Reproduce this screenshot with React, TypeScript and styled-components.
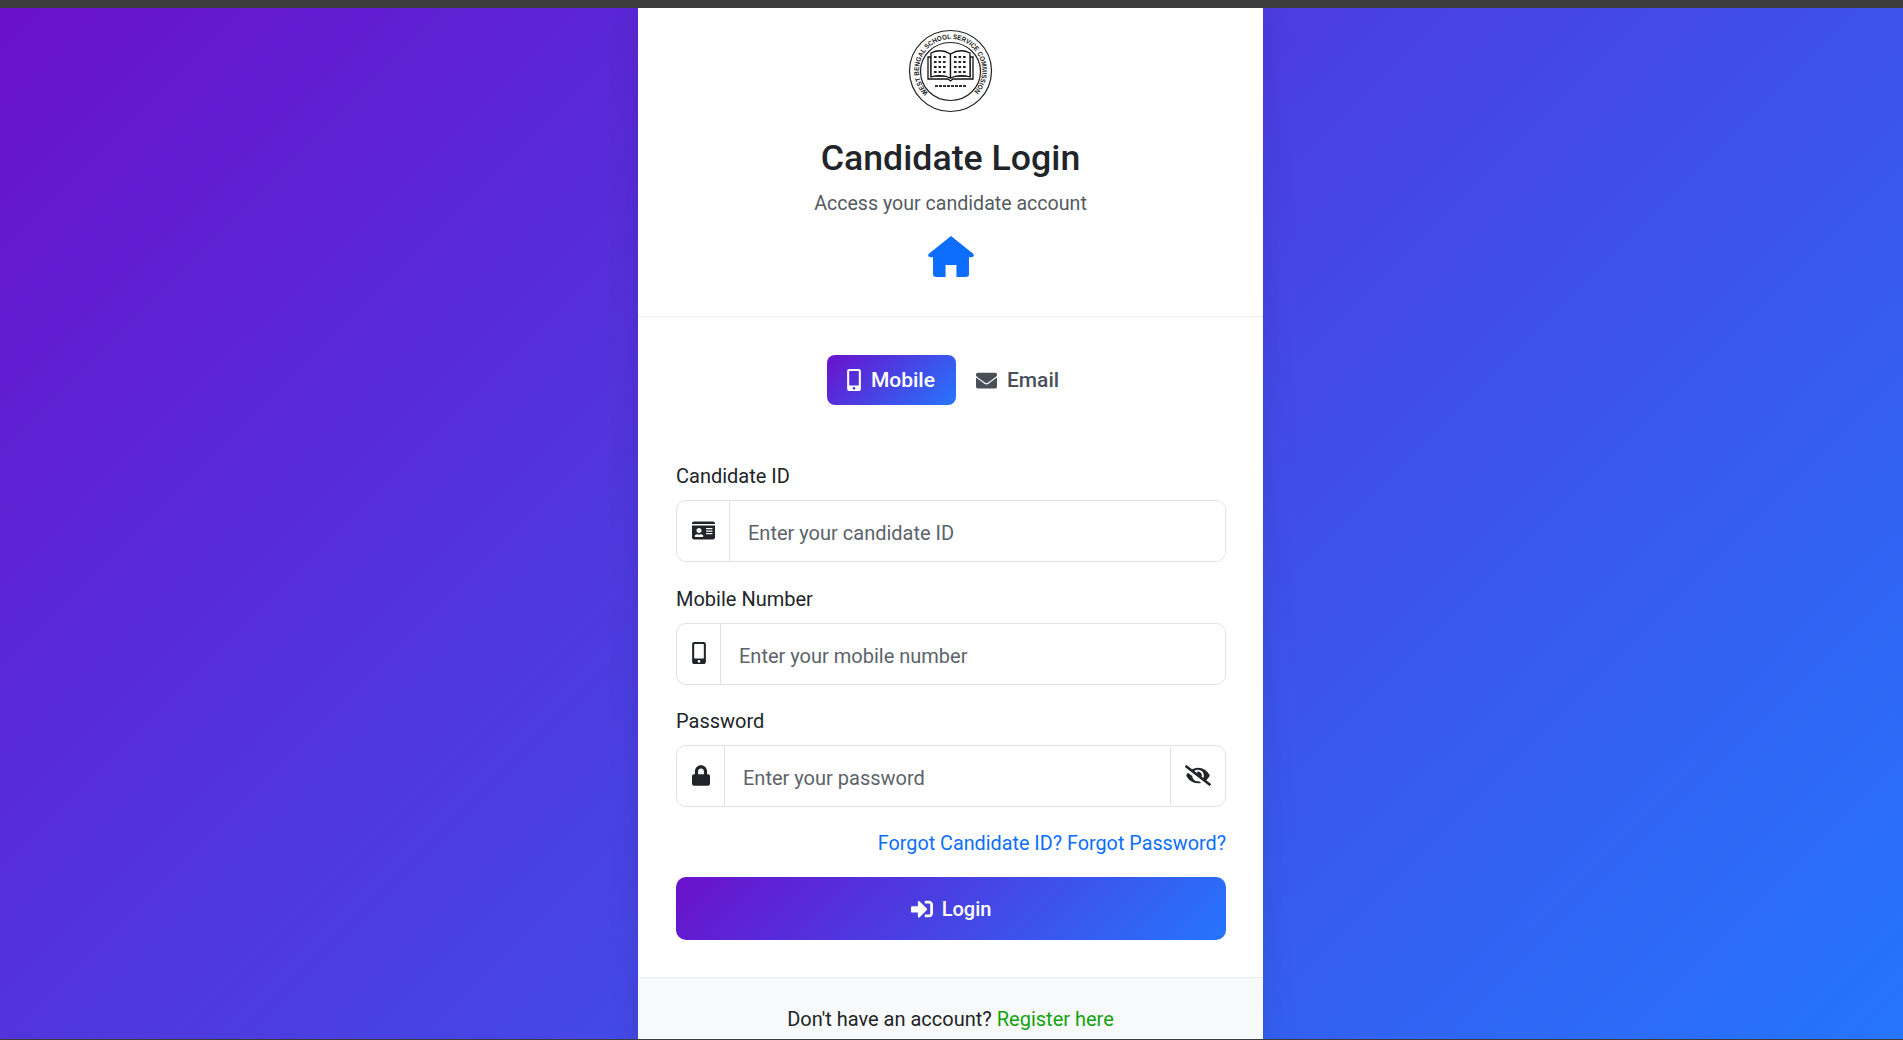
import { FaEnvelope, FaEyeSlash, FaIdCard, FaLock, FaMobileAlt, FaSignInAlt } from 'react-icons/fa';
import styled, { createGlobalStyle } from 'styled-components';

const Global = createGlobalStyle`
  html, body {
    margin: 0;
    height: 100%;
    overflow: hidden;
  }
  body {
    font-family: Roboto, "Noto Sans", sans-serif;
    color: #212529;
  }
`;

const Bar = styled.div<{ $height: number }>`
  height: ${props => props.$height}px;
  background: #3c3c3c;
`;

const Page = styled.div`
  height: 1031px;
  display: flex;
  justify-content: center;
  overflow: hidden;
  background: linear-gradient(135deg, #6a11cb 0%, #2575fc 100%);
`;

const Card = styled.main`
  width: 625px;
  height: 1100px;
  margin-right: 2px;
  background: #fff;
  box-shadow: 0 10px 30px rgba(0, 0, 0, 0.1);
`;

const Header = styled.header`
  height: 309px;
  box-sizing: border-box;
  padding-top: 21px;
  display: flex;
  flex-direction: column;
  align-items: center;
  border-bottom: 1px solid #e9ecef;
`;

const Logo = styled.svg`
  width: 86px;
  height: 84px;
  display: block;
`;

const Title = styled.h1`
  margin: 23px 0 0;
  font-size: 35.7px;
  line-height: 44px;
  font-weight: 500;
`;

const Subtitle = styled.p`
  margin: 11px 0 0;
  font-size: 19.6px;
  line-height: 26px;
  color: #545b62;
`;

const HomeLink = styled.a`
  margin-top: 19px;
  display: flex;
  color: #0d6efd;
`;

const HomeIcon = styled.svg`
  width: 46px;
  height: 41px;
`;

const Body = styled.section`
  padding: 38px 37px 37px 38px;
  border-bottom: 1px solid #e9ecef;
`;

const Tabs = styled.div`
  display: flex;
  justify-content: center;
  margin-bottom: 58px;
  padding-left: 5px;
`;

const Tab = styled.button<{ $active?: boolean }>`
  height: 50px;
  padding: 0 21px 0 20px;
  display: flex;
  align-items: center;
  gap: 10px;
  border: 0;
  border-radius: 8px;
  font: 500 21px Roboto, sans-serif;
  color: ${props => (props.$active ? '#fff' : '#495057')};
  background: ${props => (props.$active ? 'linear-gradient(135deg, #6a11cb 0%, #2575fc 100%)' : 'none')};
`;

const TabPhone = styled(FaMobileAlt)`
  width: 14px;
  height: 22px;
`;

const TabMail = styled(FaEnvelope)`
  width: 21px;
  height: 21px;
`;

const Field = styled.div`
  margin-bottom: 23.5px;
`;

const Label = styled.label`
  display: block;
  font-size: 20px;
  line-height: 26px;
  margin-bottom: 11px;
`;

const InputGroup = styled.div`
  display: flex;
  height: 62px;
  box-sizing: border-box;
  border: 1px solid #dee2e6;
  border-radius: 10px;
  overflow: hidden;
`;

const Addon = styled.span<{ $width: number; $right?: boolean }>`
  width: ${props => props.$width}px;
  flex: none;
  display: flex;
  align-items: center;
  justify-content: center;
  color: #212529;
  border-${props => (props.$right ? 'left' : 'right')}: 1px solid #dee2e6;
  padding-bottom: 2px;
  box-sizing: border-box;
`;

const CardIcon = styled(FaIdCard)`
  width: 23px;
  height: 21px;
`;

const PhoneIcon = styled(FaMobileAlt)`
  width: 14px;
  height: 22px;
`;

const LockIcon = styled(FaLock)`
  width: 18px;
  height: 21px;
`;

const EyeIcon = styled(FaEyeSlash)`
  width: 26px;
  height: 21px;
`;

const Input = styled.input`
  flex: 1;
  min-width: 0;
  border: 0;
  outline: 0;
  padding: 4px 18px 0;
  font: 20px Roboto, sans-serif;
  &::placeholder {
    color: #5c636a;
    opacity: 1;
  }
`;

const Forgot = styled.div`
  text-align: right;
  font-size: 19.8px;
  line-height: 26px;
  color: #0d6efd;
`;

const LoginButton = styled.button`
  width: 100%;
  height: 63px;
  margin-top: 20px;
  padding-top: 3px;
  display: flex;
  align-items: center;
  justify-content: center;
  gap: 9px;
  border: 0;
  border-radius: 10px;
  color: #fff;
  font: 500 20px Roboto, sans-serif;
  background: linear-gradient(135deg, #6a11cb 0%, #2575fc 100%);
`;

const LoginIcon = styled(FaSignInAlt)`
  width: 22px;
  height: 22px;
`;

const Footer = styled.footer`
  background: #f8f9fa;
  padding-top: 28px;
  height: 200px;
  text-align: center;
  font-size: 20px;
  line-height: 26px;
`;

const Register = styled.a`
  color: #13a10e;
`;

const BookPage = styled.path`
  fill: #fff;
  stroke: #111;
  stroke-width: 1.3;
`;

function SchoolLogo() {
  const dots = [];
  for (let row = 0; row < 4; row++) {
    for (let col = 0; col < 3; col++) {
      dots.push(<rect key={`l${row}${col}`} x={26 + col * 4.5} y={27 + row * 5} width="2.6" height="2" fill="#222" />);
      dots.push(<rect key={`r${row}${col}`} x={46 + col * 4.5} y={27 + row * 5} width="2.6" height="2" fill="#222" />);
    }
  }
  return (
    <Logo viewBox="0 0 86 84">
      <defs>
        <path id="ring" d="M 20.2 63.8 A 31.5 31.5 0 1 1 64.8 63.8" />
      </defs>
      <ellipse cx="42.5" cy="42" rx="41" ry="40.5" fill="none" stroke="#222" strokeWidth="1.2" />
      <ellipse cx="42.5" cy="42.5" rx="30" ry="29" fill="none" stroke="#222" strokeWidth="1.2" />
      <text fontFamily="Liberation Sans, sans-serif" fontSize="7" fontWeight="700" fill="#222">
        <textPath href="#ring" textLength="146" lengthAdjust="spacingAndGlyphs">WEST BENGAL SCHOOL SERVICE COMMISSION</textPath>
      </text>
      <BookPage d="M20 28 V50 H40 L42.5 52 L45 50 H65 V28 H62 V47 H23 V28 Z" />
      <BookPage d="M23 24 Q33 19 42.5 25 V49 Q33 45 23 48 Z" />
      <BookPage d="M42.5 25 Q52 19 62 24 V48 Q52 45 42.5 49 Z" />
      {dots}
      <path d="M27 57 H58" stroke="#333" strokeWidth="2" strokeDasharray="3 1" />
    </Logo>
  );
}

export default function App() {
  return (
    <>
      <Global />
      <Bar $height={8} />
      <Page>
        <Card>
          <Header>
            <SchoolLogo />
            <Title>Candidate Login</Title>
            <Subtitle>Access your candidate account</Subtitle>
            <HomeLink>
              <HomeIcon viewBox="0 0 110 120" preserveAspectRatio="none">
                <path
                  d="M55 0 L108 52 Q113 62 102 62 L98 62 L98 112 Q98 120 90 120 L68 120 L68 85 L42 85 L42 120 L20 120 Q12 120 12 112 L12 62 L8 62 Q-3 62 2 52 Z"
                  fill="currentColor"
                />
              </HomeIcon>
            </HomeLink>
          </Header>
          <Body>
            <Tabs>
              <Tab $active><TabPhone /> Mobile</Tab>
              <Tab><TabMail /> Email</Tab>
            </Tabs>
            <Field>
              <Label>Candidate ID</Label>
              <InputGroup>
                <Addon $width={53}><CardIcon /></Addon>
                <Input placeholder="Enter your candidate ID" />
              </InputGroup>
            </Field>
            <Field>
              <Label>Mobile Number</Label>
              <InputGroup>
                <Addon $width={44}><PhoneIcon /></Addon>
                <Input placeholder="Enter your mobile number" />
              </InputGroup>
            </Field>
            <Field>
              <Label>Password</Label>
              <InputGroup>
                <Addon $width={48}><LockIcon /></Addon>
                <Input placeholder="Enter your password" />
                <Addon $width={55} $right><EyeIcon /></Addon>
              </InputGroup>
            </Field>
            <Forgot>Forgot Candidate ID? Forgot Password?</Forgot>
            <LoginButton><LoginIcon /> Login</LoginButton>
          </Body>
          <Footer>
            Don't have an account? <Register>Register here</Register>
          </Footer>
        </Card>
      </Page>
      <Bar $height={1} />
    </>
  );
}
